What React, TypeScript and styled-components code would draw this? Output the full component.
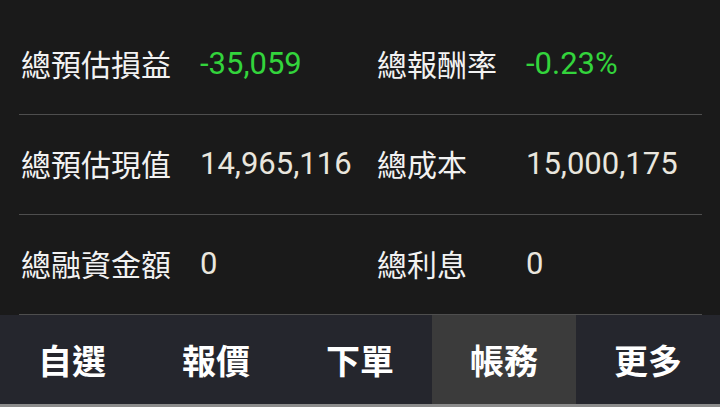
import React from "react"
import styled, { createGlobalStyle } from "styled-components"

const GlobalStyle = createGlobalStyle`
  html, body {
    margin: 0;
    padding: 0;
    background: #1a1a1a;
  }
  body {
    width: 720px;
    height: 407px;
    overflow: hidden;
    font-family: "Noto Sans CJK TC", "Noto Sans", sans-serif;
  }
`

const Screen = styled.div`
  width: 720px;
  height: 407px;
  display: flex;
  flex-direction: column;
  background: #1a1a1a;
`

const Summary = styled.div`
  flex: 1;
  padding-top: 15px;
  display: flex;
  flex-direction: column;
`

const Row = styled.div`
  margin: 0 18px 0 19px;
  height: 96px;
  padding: 0 0 3px 2px;
  border-bottom: 1px solid #4e4e4e;
  display: grid;
  grid-template-columns: 179px 177px 149px 1fr;
  align-items: center;
`

const Label = styled.span`
  font-family: "Noto Sans CJK TC", sans-serif;
  font-size: 30px;
  color: #f2f2f2;
  white-space: nowrap;
`

const Value = styled.span<{ $tone?: "up" | "down" }>`
  font-family: Roboto, "Liberation Sans", sans-serif;
  font-size: 31px;
  color: ${(p) => (p.$tone === "down" ? "#33d43c" : "#e9e6de")};
  white-space: nowrap;
`

const Nav = styled.nav`
  height: 89px;
  display: grid;
  grid-template-columns: repeat(5, 1fr);
  background: #25262d;
  border-bottom: 3px solid #8c8c8c;
`

const Tab = styled.div<{ $active?: boolean }>`
  display: flex;
  align-items: center;
  justify-content: center;
  background: ${(p) => (p.$active ? "#3b3b3b" : "transparent")};
  color: #ffffff;
  font-family: "Noto Sans CJK TC", sans-serif;
  font-weight: 700;
  font-size: 34px;
`

const rows = [
  [
    { label: "總預估損益", value: "-35,059", tone: "down" as const },
    { label: "總報酬率", value: "-0.23%", tone: "down" as const },
  ],
  [
    { label: "總預估現值", value: "14,965,116" },
    { label: "總成本", value: "15,000,175" },
  ],
  [
    { label: "總融資金額", value: "0" },
    { label: "總利息", value: "0" },
  ],
]

const tabs = ["自選", "報價", "下單", "帳務", "更多"]

export default function App() {
  return (
    <>
      <GlobalStyle />
      <Screen>
        <Summary>
          {rows.map((row, i) => (
            <Row key={i}>
              {row.map((cell) => (
                <React.Fragment key={cell.label}>
                  <Label>{cell.label}</Label>
                  <Value $tone={"tone" in cell ? cell.tone : undefined}>{cell.value}</Value>
                </React.Fragment>
              ))}
            </Row>
          ))}
        </Summary>
        <Nav>
          {tabs.map((t) => (
            <Tab key={t} $active={t === "帳務"}>
              {t}
            </Tab>
          ))}
        </Nav>
      </Screen>
    </>
  )
}
